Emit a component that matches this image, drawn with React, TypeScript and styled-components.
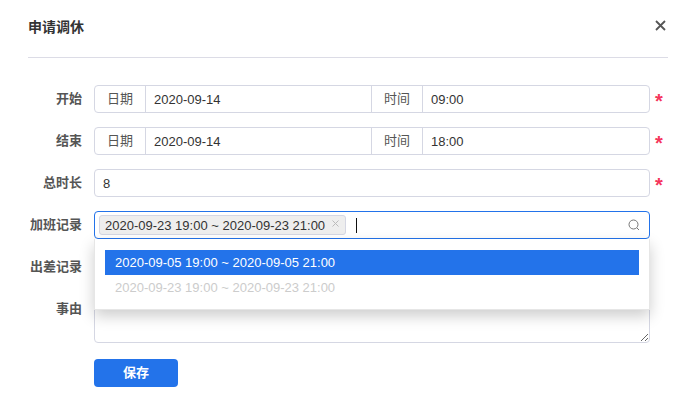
import { createGlobalStyle } from "styled-components"
import styled from "styled-components"

const GlobalStyle = createGlobalStyle`
  html, body {
    margin: 0;
    padding: 0;
    background: #fff;
  }
  body {
    font-family: "Liberation Sans", "Noto Sans CJK SC", sans-serif;
    font-size: 13px;
    color: #333;
  }
`

const Wrapper = styled.div`
  width: 695px;
  height: 411px;
  box-sizing: border-box;
  padding: 0 27px 0 28px;
  overflow: hidden;
`

const Header = styled.div`
  display: flex;
  align-items: center;
  justify-content: space-between;
  height: 58px;
  padding-bottom: 6px;
  box-sizing: border-box;
  border-bottom: 1px solid #dcdce6;
`

const Title = styled.h2`
  margin: 0;
  font-size: 14px;
  font-weight: 700;
  color: #333;
`

const CloseButton = styled.button`
  display: flex;
  width: 11px;
  height: 11px;
  margin-right: 2px;
  padding: 0;
  border: 0;
  background: none;
`

const Form = styled.form`
  display: flex;
  flex-direction: column;
  gap: 14px;
  padding-top: 27px;
`

const Row = styled.div`
  display: flex;
  align-items: flex-start;
  gap: 12px;
`

const Label = styled.label`
  width: 54px;
  line-height: 27px;
  flex: none;
  text-align: right;
  font-weight: 700;
  color: #555;
  white-space: nowrap;
`

const Group = styled.div`
  display: grid;
  grid-template-columns: 51px 226px 51px 1fr;
  width: 556px;
  height: 28px;
  box-sizing: border-box;
  border: 1px solid #d5d7e3;
  border-radius: 4px;
`

const Addon = styled.span`
  display: flex;
  align-items: center;
  justify-content: center;
  padding-bottom: 3px;
  border-right: 1px solid #d5d7e3;
  color: #555;
`

const Cell = styled.span<{ $divided?: boolean }>`
  display: flex;
  align-items: center;
  padding-left: 8px;
  color: #333;
  border-right: ${(props) => (props.$divided ? "1px solid #d5d7e3" : "0")};
`

const Input = styled.input`
  width: 556px;
  height: 28px;
  box-sizing: border-box;
  padding: 0 8px;
  border: 1px solid #d5d7e3;
  border-radius: 4px;
  font: inherit;
  color: #333;
  outline: none;
`

const Star = styled.span`
  width: 8px;
  height: 28px;
  margin-left: -7px;
  padding-top: 2px;
  box-sizing: border-box;
  line-height: 28px;
  font-size: 20px;
  font-weight: 700;
  color: #f5365c;
`

const SelectBox = styled.div`
  position: relative;
  width: 556px;
`

const SelectControl = styled.div`
  display: flex;
  align-items: center;
  height: 28px;
  box-sizing: border-box;
  padding: 0 9px 0 4px;
  border: 1px solid #2373ea;
  border-radius: 4px;
`

const Tag = styled.span`
  display: flex;
  align-items: center;
  height: 20px;
  box-sizing: border-box;
  padding: 0 6px 0 5px;
  gap: 7px;
  background: #eee;
  border: 1px solid #d5d7e3;
  border-radius: 3px;
  white-space: nowrap;
`

const TagClose = styled.svg`
  width: 7px;
  height: 7px;
  margin-bottom: 4px;
`

const Caret = styled.span`
  width: 1px;
  height: 15px;
  margin-left: 10px;
  background: #111;
`

const SearchIcon = styled.svg`
  width: 12px;
  height: 12px;
  margin-left: auto;
`

const Dropdown = styled.ul`
  position: absolute;
  z-index: 2;
  top: 28px;
  left: 0;
  right: 0;
  height: 71px;
  box-sizing: border-box;
  margin: 0;
  padding: 11px 10px;
  list-style: none;
  background: #fff;
  border: 1px solid #e6e6e6;
  border-top: 0;
  box-shadow: 0 6px 14px rgba(0, 0, 0, 0.2);
`

const Option = styled.li<{ $disabled?: boolean }>`
  height: 25px;
  line-height: 25px;
  padding-left: 10px;
  background: ${(props) => (props.$disabled ? "#fff" : "#2373ea")};
  color: ${(props) => (props.$disabled ? "#ccc" : "#fff")};
`

const TextArea = styled.textarea`
  display: block;
  width: 556px;
  height: 48px;
  box-sizing: border-box;
  padding: 6px 8px;
  border: 1px solid #d5d7e3;
  border-radius: 4px;
  font: inherit;
  outline: none;
`

const Actions = styled.div`
  padding: 2px 0 0 66px;
`

const SaveButton = styled.button`
  width: 84px;
  height: 28px;
  padding: 0 0 4px;
  border: 0;
  border-radius: 4px;
  background: #2373ea;
  color: #fff;
  font: inherit;
  font-weight: 700;
`

const DateTimeGroup = ({ date, time }: { date: string; time: string }) => (
  <Group>
    <Addon>日期</Addon>
    <Cell $divided>{date}</Cell>
    <Addon>时间</Addon>
    <Cell>{time}</Cell>
  </Group>
)

const App = () => {
  return (
    <Wrapper>
      <GlobalStyle />
      <Header>
        <Title>申请调休</Title>
        <CloseButton type="button" aria-label="关闭">
          <svg viewBox="0 0 11 11" width="11" height="11">
            <path d="M1 1l9 9M10 1l-9 9" stroke="#555" strokeWidth="1.8" fill="none" />
          </svg>
        </CloseButton>
      </Header>
      <Form>
        <Row>
          <Label>开始</Label>
          <DateTimeGroup date="2020-09-14" time="09:00" />
          <Star>*</Star>
        </Row>
        <Row>
          <Label>结束</Label>
          <DateTimeGroup date="2020-09-14" time="18:00" />
          <Star>*</Star>
        </Row>
        <Row>
          <Label>总时长</Label>
          <Input defaultValue="8" />
          <Star>*</Star>
        </Row>
        <Row>
          <Label>加班记录</Label>
          <SelectBox>
            <SelectControl>
              <Tag>
                2020-09-23 19:00 ~ 2020-09-23 21:00
                <TagClose viewBox="0 0 7 7">
                  <path d="M0.5 0.5l6 6M6.5 0.5l-6 6" stroke="#bbb" strokeWidth="1" fill="none" />
                </TagClose>
              </Tag>
              <Caret />
              <SearchIcon viewBox="0 0 12 12">
                <circle cx="5.5" cy="5.5" r="4.5" stroke="#777" strokeWidth="1" fill="none" />
                <path d="M9 9l2 2" stroke="#777" strokeWidth="1" fill="none" />
              </SearchIcon>
            </SelectControl>
            <Dropdown>
              <Option>2020-09-05 19:00 ~ 2020-09-05 21:00</Option>
              <Option $disabled>2020-09-23 19:00 ~ 2020-09-23 21:00</Option>
            </Dropdown>
          </SelectBox>
        </Row>
        <Row>
          <Label>出差记录</Label>
          <Input />
        </Row>
        <Row>
          <Label>事由</Label>
          <TextArea />
        </Row>
        <Actions>
          <SaveButton type="button">保存</SaveButton>
        </Actions>
      </Form>
    </Wrapper>
  )
}

export default App
